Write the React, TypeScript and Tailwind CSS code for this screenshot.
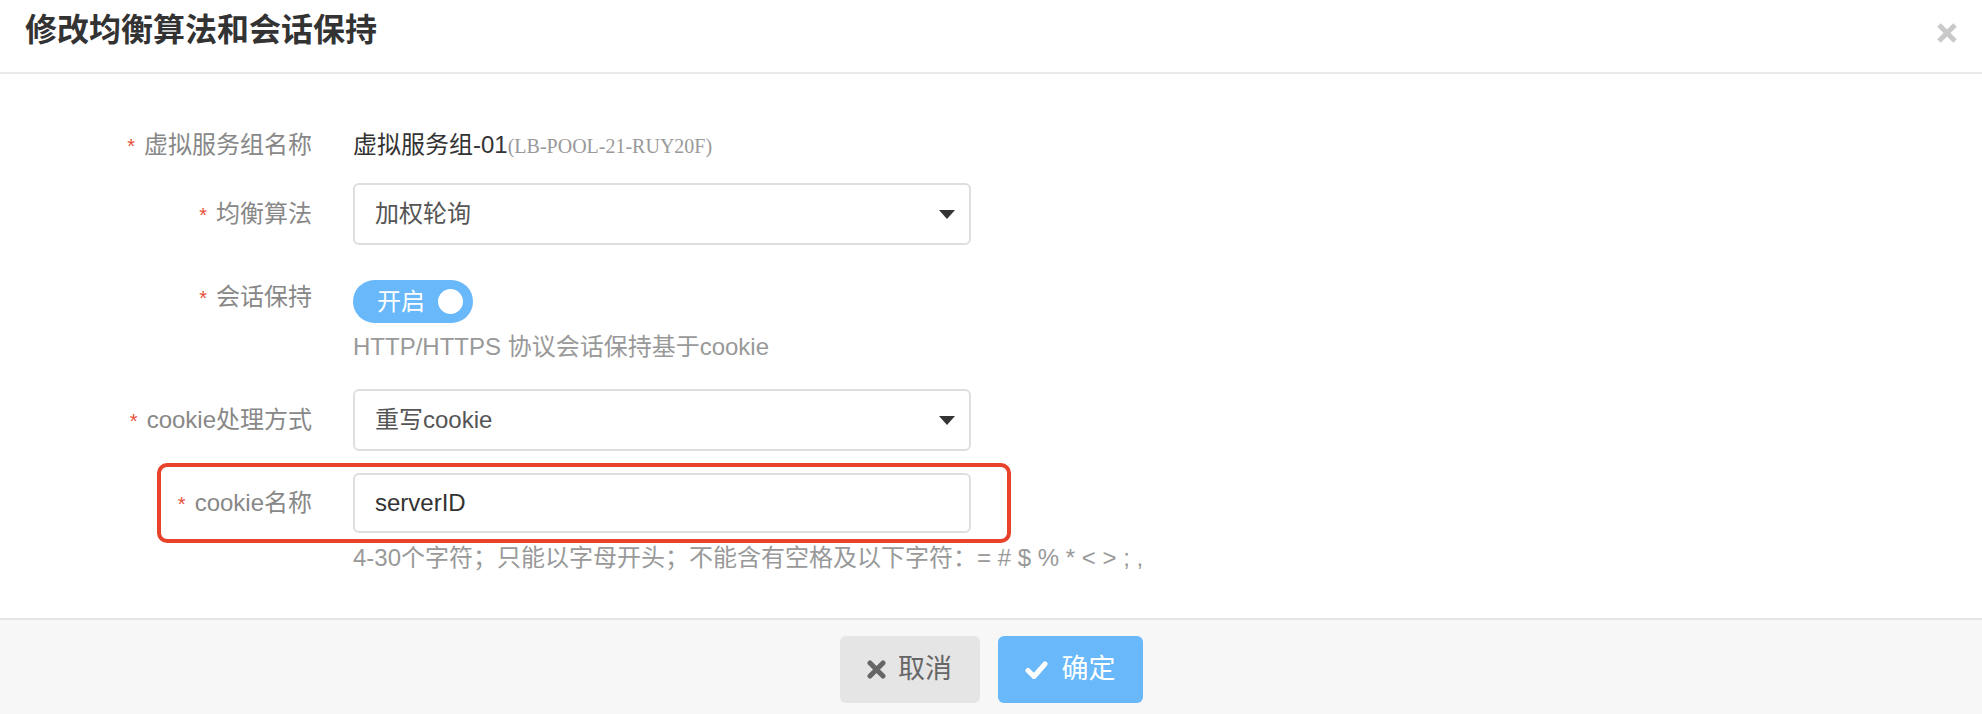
import { useState } from 'react';

const FONT = "font-['Liberation_Sans','Noto_Sans_CJK_SC',sans-serif]";

function Label({ text, className = '' }: { text: string; className?: string }) {
  return (
    <div className={`w-[312px] shrink-0 text-right text-[24px] text-[#888] ${className}`}>
      <span className="mr-[9px] text-[20px] text-[#e8503a]">*</span>
      {text}
    </div>
  );
}

function Caret() {
  return (
    <svg width="16" height="9" viewBox="0 0 16 9" className="shrink-0">
      <path d="M0 0h16L8 9z" fill="#333" />
    </svg>
  );
}

function SelectBox({ value }: { value: string }) {
  return (
    <div className="flex h-[62px] w-[618px] items-center justify-between rounded-[6px] border-2 border-[#dedede] bg-white pl-[20px] pr-[14px] text-[24px] text-[#555]">
      <span>{value}</span>
      <Caret />
    </div>
  );
}

export default function App() {
  const [on, setOn] = useState(true);
  const [name, setName] = useState('serverID');

  return (
    <div className={`flex h-[714px] w-[1982px] flex-col bg-white ${FONT}`}>
      {/* header */}
      <div className="flex h-[74px] shrink-0 items-start justify-between border-b-2 border-[#ebebeb] pl-[25px] pr-[25px]">
        <h1 className="pt-[12px] text-[32px] font-bold leading-[36px] text-[#333]">修改均衡算法和会话保持</h1>
        <button className="mt-[23px]">
          <svg width="20" height="20" viewBox="0 0 20 20">
            <path d="M2 2l16 16M18 2L2 18" stroke="#c9c9c9" strokeWidth="5" />
          </svg>
        </button>
      </div>

      {/* body */}
      <div className="flex flex-1 flex-col pt-[56px]">
        <div className="flex h-[30px] items-center gap-[41px]">
          <Label text="虚拟服务组名称" className="leading-[30px]" />
          <div className="text-[24px] leading-[30px] text-[#333]">
            虚拟服务组-01
            <span className="font-['Liberation_Serif',serif] text-[20px] text-[#999]">(LB-POOL-21-RUY20F)</span>
          </div>
        </div>

        <div className="mt-[23px] flex items-center gap-[41px]">
          <Label text="均衡算法" />
          <SelectBox value="加权轮询" />
        </div>

        <div className="mt-[35px] flex items-start gap-[41px]">
          <Label text="会话保持" className="leading-[34px]" />
          <div className="flex flex-col">
            <button
              onClick={() => setOn(!on)}
              className="flex h-[43px] w-[120px] items-center justify-between rounded-full bg-[#68b8fa] pl-[24px] pr-[10px] text-[24px] text-white"
            >
              <span>{on ? '开启' : '关闭'}</span>
              <span className="h-[25px] w-[25px] rounded-full bg-white" />
            </button>
            <div className="mt-[9px] text-[24px] leading-[30px] text-[#999]">HTTP/HTTPS 协议会话保持基于cookie</div>
          </div>
        </div>

        <div className="mt-[27px] flex items-center gap-[41px]">
          <Label text="cookie处理方式" />
          <SelectBox value="重写cookie" />
        </div>

        <div className="relative mt-[22px] flex items-center gap-[41px]">
          <Label text="cookie名称" />
          <input
            value={name}
            onChange={(e) => setName(e.target.value)}
            className="h-[60px] w-[618px] rounded-[6px] border-2 border-[#dedede] pl-[20px] text-[24px] text-[#333] outline-none"
          />
          <div className="pointer-events-none absolute -top-[10px] -bottom-[10px] left-[157px] w-[854px] rounded-[10px] border-4 border-[#e8432a]" />
        </div>
        <div className="ml-[353px] mt-[10px] text-[24px] leading-[30px] text-[#999]">
          4-30个字符；只能以字母开头；不能含有空格及以下字符：= # $ % * &lt; &gt; ; ,
        </div>
      </div>

      {/* footer */}
      <div className="flex h-[96px] shrink-0 items-start justify-center gap-[18px] border-t-2 border-[#e6e6e6] bg-[#f7f7f7] pt-[16px]">
        <button className="flex h-[67px] w-[140px] items-center justify-center gap-[12px] rounded-[6px] bg-[#e5e5e5] text-[27px] text-[#666]">
          <svg width="19" height="19" viewBox="0 0 19 19">
            <path d="M3 3l13 13M16 3L3 16" stroke="#666" strokeWidth="5" strokeLinecap="round" />
          </svg>
          取消
        </button>
        <button className="flex h-[67px] w-[145px] items-center justify-center gap-[14px] rounded-[6px] bg-[#68b8fa] text-[27px] text-white">
          <svg width="23" height="18" viewBox="0 0 23 18">
            <path d="M3 9.5l6 6L20 3" stroke="#fff" strokeWidth="5" fill="none" strokeLinecap="round" strokeLinejoin="round" />
          </svg>
          确定
        </button>
      </div>
    </div>
  );
}
